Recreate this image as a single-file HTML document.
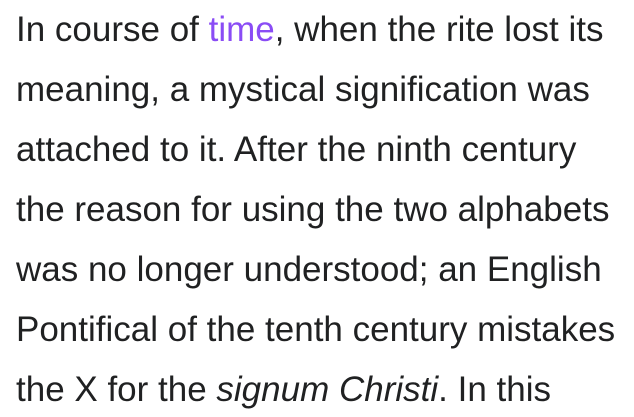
<!DOCTYPE html>
<html><head><meta charset="utf-8"><style>
html,body{margin:0;padding:0;background:#fff;width:634px;height:417px;overflow:hidden}
p{margin:0;padding:0 0 0 16px;font-family:"Liberation Sans",sans-serif;font-size:35px;line-height:60px;color:#202122;width:640px;white-space:nowrap}
a{color:#8a4cf5;text-decoration:none}
</style></head><body>
<p>In course of <a>time</a>, when the rite lost its<br>meaning, a mystical signification was<br>attached to it. After the ninth century<br>the reason for using the two alphabets<br>was no longer understood; an English<br>Pontifical of the tenth century mistakes<br>the X for the <i>signum Christi</i>. In this</p>
</body></html>
